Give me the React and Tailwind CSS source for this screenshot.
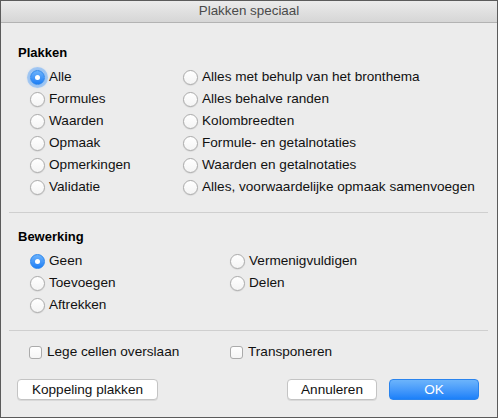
import React, { useState } from 'react';

const font = { fontFamily: '"Liberation Sans", Arial, sans-serif' };

const Radio = ({ checked, focused, label, onClick }) => (
  <button type="button" onClick={onClick} className="flex items-center h-[22px] text-left">
    <span
      className={`relative flex items-center justify-center w-[15px] h-[15px] rounded-full shrink-0 ${
        checked
          ? 'bg-gradient-to-b from-[#69b1fb] to-[#1b7ff6] border border-[#2a86ee]'
          : 'bg-gradient-to-b from-white to-[#f4f4f4] border border-[#ababab] shadow-[0_0.5px_1px_rgba(0,0,0,0.15)]'
      } ${focused ? 'ring-[3px] ring-[#7cb4f5]/60 shadow-[0_0_3px_2px_rgba(100,165,245,0.35)]' : ''}`}
    >
      {checked && <span className="w-[5px] h-[5px] rounded-full bg-white" />}
    </span>
    <span className="ml-[4px] text-[13.6px] text-[#111] leading-none whitespace-nowrap">{label}</span>
  </button>
);

const Check = ({ checked, label, onClick }) => (
  <button type="button" onClick={onClick} className="flex items-center h-[22px]">
    <span className="flex items-center justify-center w-[13px] h-[13px] rounded-[3px] border border-[#ababab] bg-gradient-to-b from-white to-[#f5f5f5] shrink-0">
      {checked && (
        <svg viewBox="0 0 10 10" className="w-[9px] h-[9px]"><path d="M1.5 5.5 L4 8 L8.5 2" fill="none" stroke="#333" strokeWidth="1.6" /></svg>
      )}
    </span>
    <span className="ml-[5px] text-[13.6px] text-[#111] leading-none whitespace-nowrap">{label}</span>
  </button>
);

const pasteLeft = ['Alle', 'Formules', 'Waarden', 'Opmaak', 'Opmerkingen', 'Validatie'];
const pasteRight = [
  'Alles met behulp van het bronthema',
  'Alles behalve randen',
  'Kolombreedten',
  'Formule- en getalnotaties',
  'Waarden en getalnotaties',
  'Alles, voorwaardelijke opmaak samenvoegen',
];

const btnCls = 'h-[21px] rounded-[4px] bg-white border border-[#c4c4c4] shadow-[0_1px_0_rgba(0,0,0,0.08)] text-[13.6px] text-[#111]';

const App = () => {
  const [paste, setPaste] = useState('Alle');
  const [op, setOp] = useState('Geen');
  const [skip, setSkip] = useState(false);
  const [transpose, setTranspose] = useState(false);

  return (
    <div style={font} className="w-[498px] h-[418px] border border-[#5b5b5b] bg-[#ececec] flex flex-col overflow-hidden">
      <div className="h-[22px] shrink-0 border-b border-[#b3b3b3] bg-gradient-to-b from-[#ebebeb] to-[#d6d6d6] flex items-center justify-center text-[13.4px] text-[#4a4a4a]">
        Plakken speciaal
      </div>

      <div className="px-[8px] pt-[22px]">
        <div className="pl-[9px] text-[13px] font-bold leading-[16px] text-black">Plakken</div>
        <div className="mt-[5px] pl-[21px] grid grid-cols-[153px_1fr]">
          <div className="flex flex-col">
            {pasteLeft.map((l, i) => (
              <Radio key={l} label={l} checked={paste === l} focused={i === 0 && paste === l} onClick={() => setPaste(l)} />
            ))}
          </div>
          <div className="flex flex-col">
            {pasteRight.map(l => (
              <Radio key={l} label={l} checked={paste === l} onClick={() => setPaste(l)} />
            ))}
          </div>
        </div>

        <div className="mt-[14px] h-px bg-[#cfcfcf] mr-[1px]" />

        <div className="mt-[16px] pl-[9px] text-[13px] font-bold leading-[16px] text-black">Bewerking</div>
        <div className="mt-[5px] pl-[21px] grid grid-cols-[200px_1fr]">
          <div className="flex flex-col">
            {['Geen', 'Toevoegen', 'Aftrekken'].map(l => (
              <Radio key={l} label={l} checked={op === l} onClick={() => setOp(l)} />
            ))}
          </div>
          <div className="flex flex-col">
            {['Vermenigvuldigen', 'Delen'].map(l => (
              <Radio key={l} label={l} checked={op === l} onClick={() => setOp(l)} />
            ))}
          </div>
        </div>

        <div className="mt-[14px] h-px bg-[#cfcfcf] mr-[1px]" />

        <div className="mt-[10px] pl-[20px] grid grid-cols-[201px_1fr]">
          <Check label="Lege cellen overslaan" checked={skip} onClick={() => setSkip(v => !v)} />
          <Check label="Transponeren" checked={transpose} onClick={() => setTranspose(v => !v)} />
        </div>

        <div className="mt-[16px] pl-[8px] pr-[10px] flex items-center">
          <button type="button" className={`w-[141px] ${btnCls}`}>Koppeling plakken</button>
          <div className="flex-1" />
          <button type="button" className={`w-[90px] ${btnCls}`}>Annuleren</button>
          <button type="button" className="ml-[12px] w-[90px] h-[21px] rounded-[4px] bg-gradient-to-b from-[#6cb4fb] to-[#1a80f9] border border-[#2a84ee] text-[13.6px] text-white">
            OK
          </button>
        </div>
      </div>
    </div>
  );
};

export default App;
